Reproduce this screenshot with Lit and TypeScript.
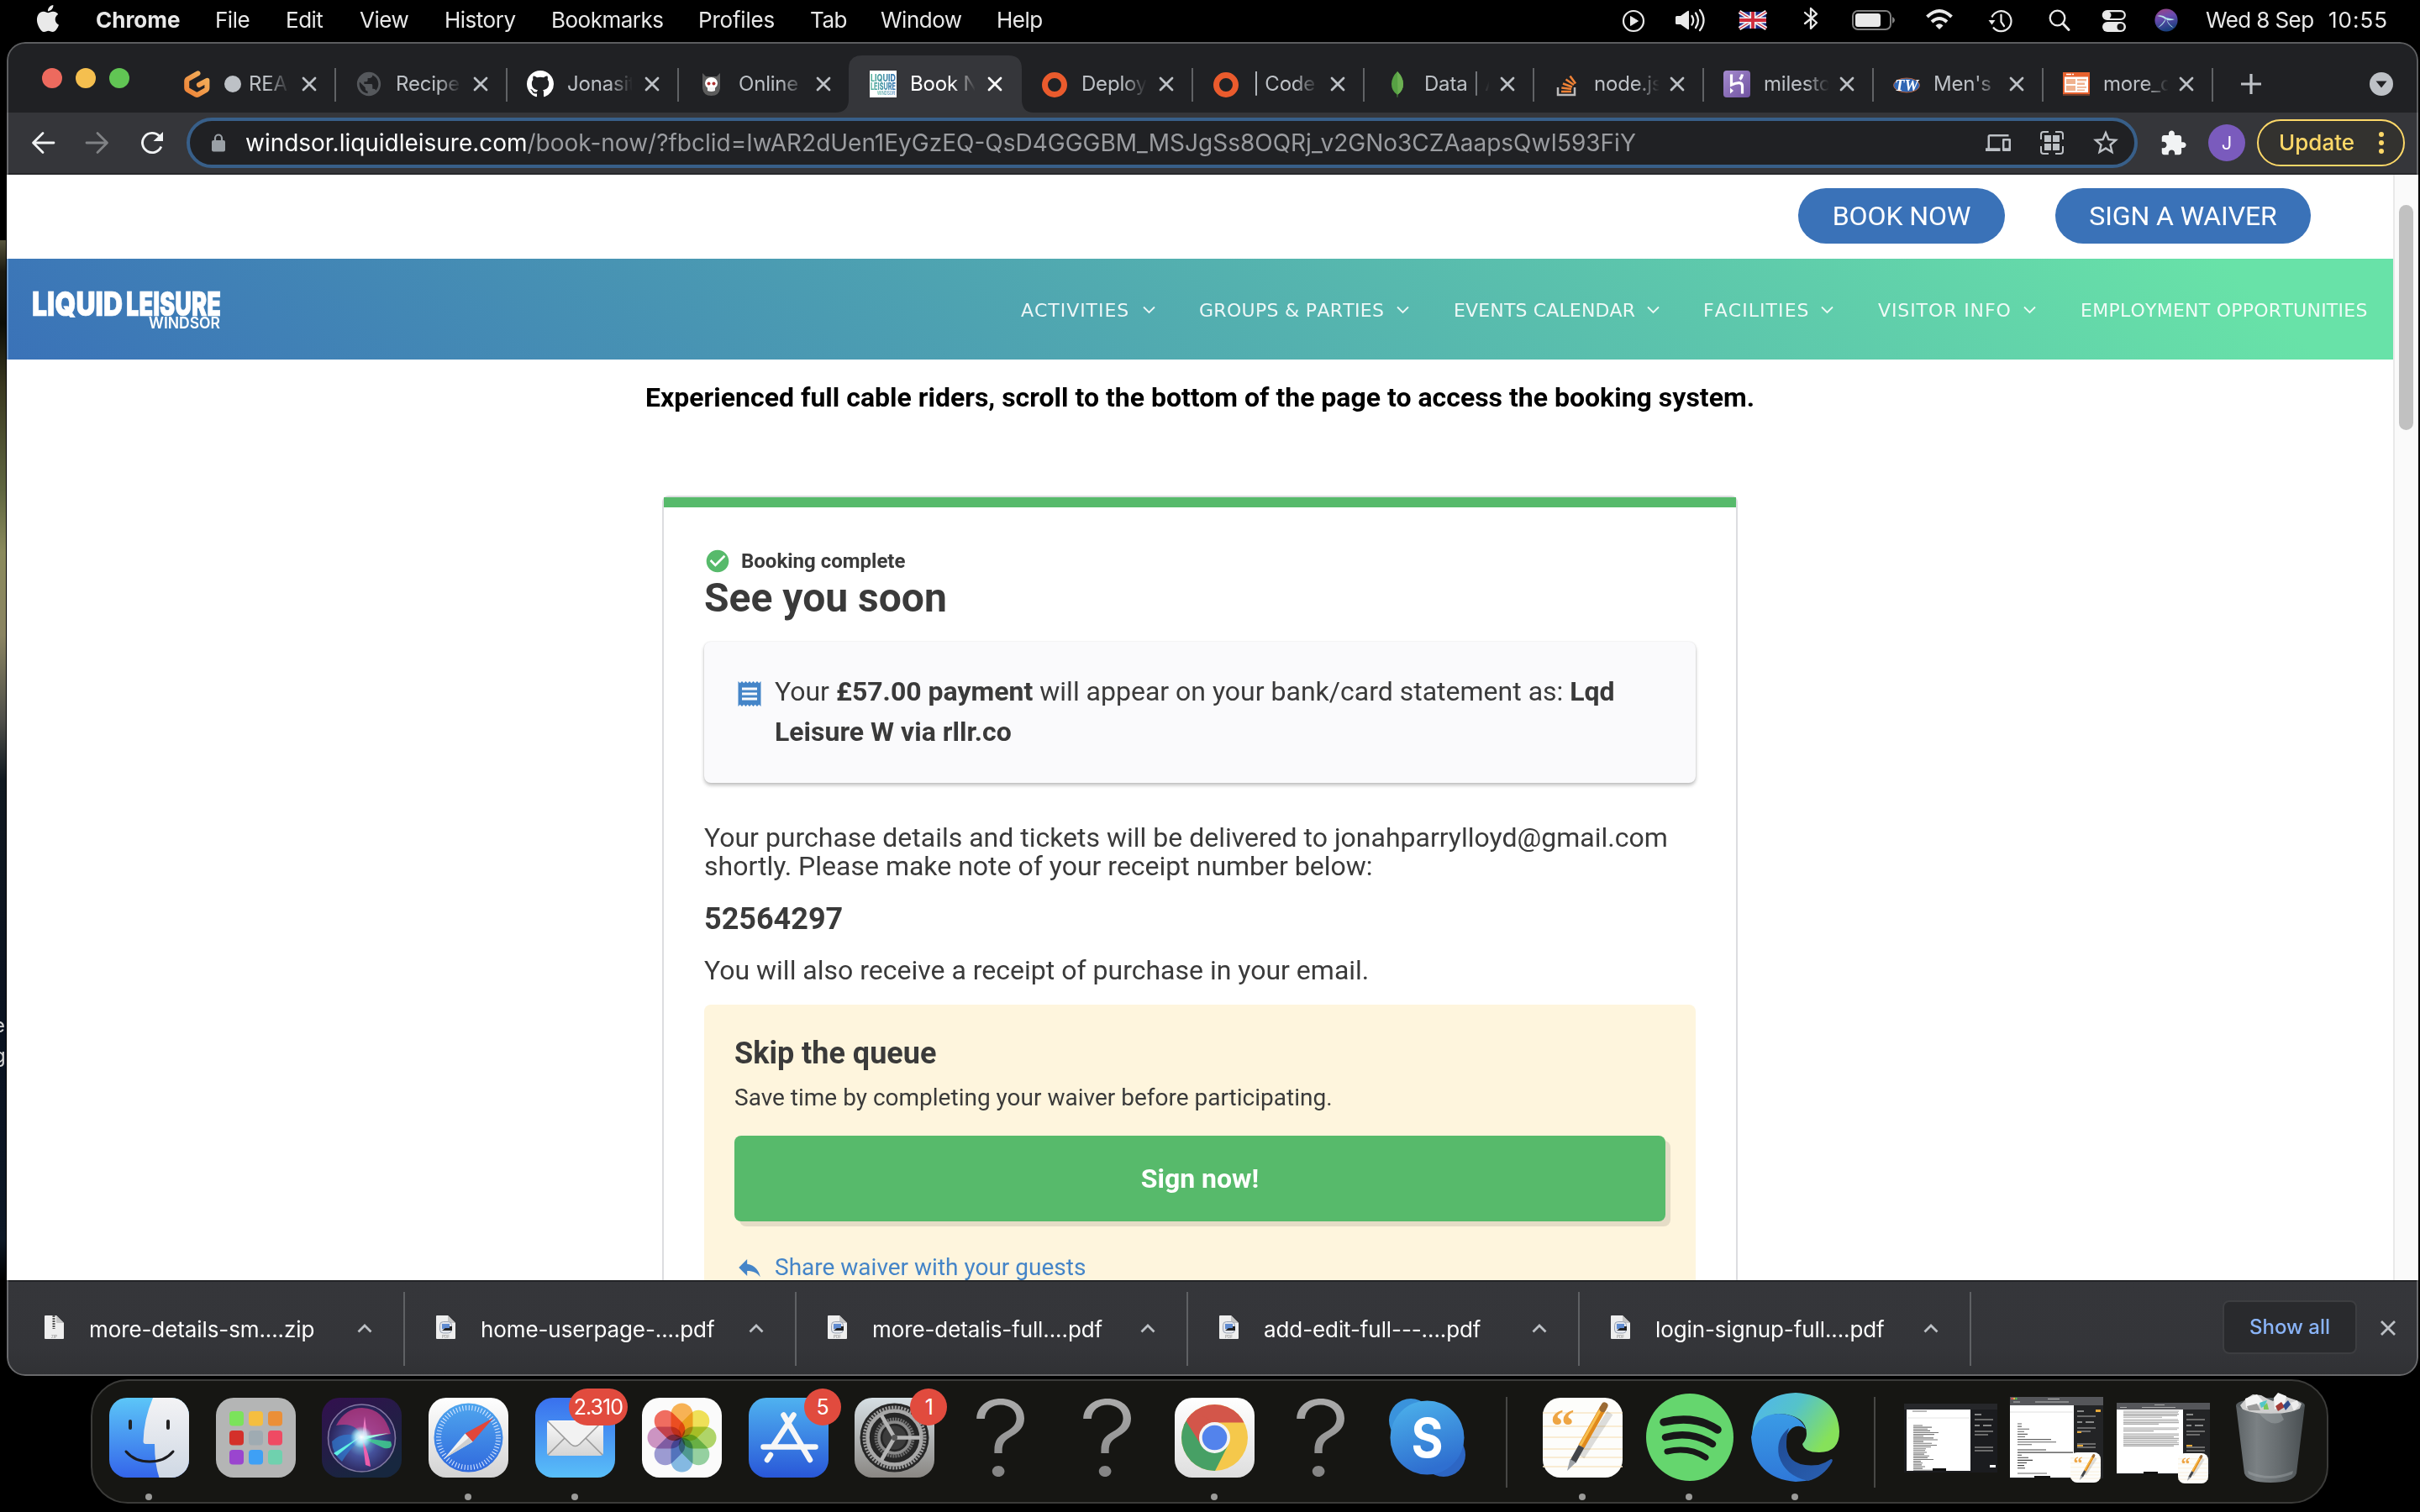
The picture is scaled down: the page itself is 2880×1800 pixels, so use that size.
import { LitElement, html, svg, css, nothing } from "lit";
import { customElement } from "lit/decorators.js";
import { classMap } from "lit/directives/class-map.js";

const base = css`
  * { box-sizing: border-box; }
  :host { display: block; font-family: Inter, "Liberation Sans", sans-serif; }
  svg { display: block; flex: none; overflow: visible; }
`;

const GITHUB =
  "M8 0C3.58 0 0 3.58 0 8c0 3.54 2.29 6.53 5.47 7.59.4.07.55-.17.55-.38 0-.19-.01-.82-.01-1.49-2.01.37-2.53-.49-2.69-.94-.09-.23-.48-.94-.82-1.13-.28-.15-.68-.52-.01-.53.63-.01 1.08.58 1.23.82.72 1.21 1.87.87 2.33.66.07-.52.28-.87.51-1.07-1.78-.2-3.64-.89-3.64-3.95 0-.87.31-1.59.82-2.15-.08-.2-.36-1.02.08-2.12 0 0 .67-.21 2.2.82.64-.18 1.32-.27 2-.27.68 0 1.36.09 2 .27 1.53-1.04 2.2-.82 2.2-.82.44 1.1.16 1.92.08 2.12.51.56.82 1.27.82 2.15 0 3.07-1.87 3.75-3.65 3.95.29.25.54.73.54 1.48 0 1.07-.01 1.93-.01 2.2 0 .21.15.46.55.38A8.013 8.013 0 0016 8c0-4.42-3.58-8-8-8z";
const GLOBE =
  "M12 2C6.48 2 2 6.48 2 12s4.48 10 10 10 10-4.48 10-10S17.52 2 12 2zm-1 17.93c-3.95-.49-7-3.85-7-7.93 0-.62.08-1.21.21-1.79L9 15v1c0 1.1.9 2 2 2v1.93zm6.9-2.54c-.26-.81-1-1.39-1.9-1.39h-1v-3c0-.55-.45-1-1-1H8v-2h2c.55 0 1-.45 1-1V7h2c1.1 0 2-.9 2-2v-.41c2.93 1.19 5 4.06 5 7.41 0 2.08-.8 3.97-2.1 5.39z";
const APPLE =
  "M12.152 6.896c-.948 0-2.415-1.078-3.96-1.04-2.04.027-3.91 1.183-4.961 3.014-2.117 3.675-.546 9.103 1.519 12.09 1.013 1.454 2.208 3.09 3.792 3.039 1.52-.065 2.09-.987 3.935-.987 1.831 0 2.35.987 3.96.948 1.637-.026 2.676-1.48 3.676-2.948 1.156-1.688 1.636-3.325 1.662-3.415-.039-.013-3.182-1.221-3.22-4.857-.026-3.04 2.48-4.494 2.597-4.559-1.429-2.09-3.623-2.324-4.39-2.376-2-.156-3.675 1.09-4.61 1.09zM15.53 3.83c.843-1.012 1.4-2.427 1.245-3.83-1.207.052-2.662.805-3.532 1.818-.78.896-1.454 2.338-1.273 3.714 1.338.104 2.715-.688 3.559-1.701";

/* ---------- macOS menu bar ---------- */

const MENUS: [string, string][] = [
  ["File", "m-file"], ["Edit", "m-edit"], ["View", "m-view"], ["History", "m-history"],
  ["Bookmarks", "m-bookmarks"], ["Profiles", "m-profiles"], ["Tab", "m-tab"],
  ["Window", "m-window"], ["Help", "m-help"],
];

@customElement("os-menubar")
class OsMenubar extends LitElement {
  static styles = [base, css`
    :host { height: 50px; background: #000; color: #e9e9e9; font-size: 26px; line-height: 47px; }
    .bar { display: flex; height: 50px; padding-left: 41px; white-space: nowrap; }
    .apple { margin-top: 6px; }
    .menu { flex: none; letter-spacing: -0.5px; }
    .menu.m-app { font-weight: 700; width: 142px; margin-left: 41px; letter-spacing: 0; }
    .m-file { width: 84px; } .m-edit { width: 88px; } .m-view { width: 101px; }
    .m-history { width: 127px; } .m-bookmarks { width: 175px; } .menu.m-profiles { width: 133px; letter-spacing: -0.2px; }
    .m-tab { width: 84px; } .m-window { width: 138px; } .m-help { width: 70px; }
    .status { margin-left: auto; display: flex; align-items: flex-start; padding-right: 37px; }
    .status svg { margin-top: 8px; }
    .date { width: 146px; margin-left: 31px; letter-spacing: -0.6px; }
    .time { width: 72px; letter-spacing: 1px; }
  `];
  render() {
    return html`<div class="bar">
      <svg class="apple" width="32" height="32" viewBox="0 0 24 24" fill="#e9e9e9"><path d=${APPLE} /></svg>
      <span class="menu m-app">Chrome</span>
      ${MENUS.map(([t, c]) => html`<span class="menu ${c}">${t}</span>`)}
      <div class="status">
        <svg width="664" height="34" viewBox="1930 8 664 34">
          <circle cx="1944" cy="25" r="12" fill="none" stroke="#e9e9e9" stroke-width="2.2" />
          <path d="M1940.500 19.500v11l9-5.500z" fill="#e9e9e9" stroke="#e9e9e9" stroke-linejoin="round" />
          <path d="M1994 20.500q0-1.500 1.500-1.500h4.500l8.500-6q1.500-1 1.500 1v20q0 2-1.500 1l-8.500-6h-4.500q-1.500 0-1.500-1.500z" fill="#e9e9e9" />
          <path d="M2013.500 19q3.500 5 0 10.500M2018 15.500q6 8.500 0 17.500M2023 12q9 12.500 0 24" fill="none" stroke="#e9e9e9" stroke-width="2.300" stroke-linecap="round" />
          <rect x="2070" y="14" width="32" height="20" fill="#1d2d86" />
          <path d="M2070 14l32 20M2102 14l-32 20" stroke="#f2f2f5" stroke-width="4.600" />
          <path d="M2070 14l32 20M2102 14l-32 20" stroke="#cf2c3c" stroke-width="1.300" />
          <path d="M2086 14v20M2070 24h32" stroke="#f2f2f5" stroke-width="7" />
          <path d="M2086 14v20M2070 24h32" stroke="#cf2c3c" stroke-width="3.800" />
          <path d="M2148 15l14 12-7 7V10l7 6.500-14 11.500" fill="none" stroke="#e9e9e9" stroke-width="2.300" stroke-linejoin="round" stroke-linecap="round" />
          <rect x="2205" y="13" width="45" height="22" rx="6" fill="none" stroke="#808080" stroke-width="2" />
          <rect x="2208" y="16" width="30" height="16" rx="3" fill="#e9e9e9" />
          <path d="M2252 20q3 1.500 3 4t-3 4z" fill="#808080" />
          <path d="M2293.500 20q14.500-14 29 0M2299 26q9-8 18 0" fill="none" stroke="#e9e9e9" stroke-width="4" />
          <path d="M2303.500 30.500q4.500-4.500 9 0l-4.500 4.500z" fill="#e9e9e9" />
          <path d="M2370.500 20.500a12 12 0 1 1 1.500 12" fill="none" stroke="#e9e9e9" stroke-width="2.200" />
          <path d="M2366.500 24h8l-4 5.500z" fill="#e9e9e9" />
          <path d="M2381.500 17.500v8.500l3.500 5" fill="none" stroke="#e9e9e9" stroke-width="2.200" stroke-linecap="round" />
          <circle cx="2448.500" cy="21.500" r="8.800" fill="none" stroke="#e9e9e9" stroke-width="2.300" />
          <path d="M2455 28l7 7.500" stroke="#e9e9e9" stroke-width="3" stroke-linecap="round" />
          <rect x="2502.800" y="13.200" width="26" height="9.800" rx="4.900" fill="none" stroke="#e9e9e9" stroke-width="2.200" />
          <circle cx="2508" cy="18" r="4.500" fill="#e9e9e9" />
          <rect x="2502" y="26" width="28" height="12" rx="6" fill="#e9e9e9" />
          <circle cx="2523.500" cy="32" r="4" fill="#111" />
          <defs>
            <linearGradient id="ms" x1="0" y1="0" x2="0.300" y2="1"><stop offset="0" stop-color="#a0437f" /><stop offset=".45" stop-color="#6a4bb0" /><stop offset="1" stop-color="#1b3f7f" /></linearGradient>
          </defs>
          <circle cx="2578" cy="24" r="13.600" fill="url(#ms)" />
          <path d="M2568 33q7-3 10-11 2 9 9 11-6-4-8-9 5 1 9-1-6-1-10-2-5-4-11-2 7 1 10 4-3 5-9 10z" fill="#bff6f2" opacity=".9" />
        </svg>
        <span class="date">Wed 8 Sep</span><span class="time">10:55</span>
      </div>
    </div>`;
  }
}

/* ---------- browser chrome ---------- */

const favicons = {
  gitpod: svg`<svg width="32" height="32" viewBox="0 0 32 32"><defs><linearGradient id="gp" x1="1" y1="0" x2="0" y2="1"><stop offset="0" stop-color="#f3b45f"/><stop offset="1" stop-color="#ee8236"/></linearGradient></defs><path d="M16.500 2.800L5 9.300q-1.800 1-1.800 3v7.600q0 2 1.800 3l9.200 5.200q1.200.7 2.400 0l9.200-5.200q1.600-1 1.600-3v-8.600l-9.500 5.200" transform="translate(0 .5)" fill="none" stroke="url(#gp)" stroke-width="6" stroke-linecap="round" stroke-linejoin="round"/></svg>`,
  globe: svg`<svg width="34" height="34" viewBox="0 0 24 24"><path fill="#55585c" d=${GLOBE}/></svg>`,
  github: svg`<svg width="32" height="32" viewBox="0 0 16 16"><path fill="#fff" d=${GITHUB}/></svg>`,
  bunny: svg`<svg width="32" height="32" viewBox="0 0 32 32"><path d="M5 3l4 4h13l4-4v18q-1 9-10.500 9T5 21z" fill="#5c5c5c"/><ellipse cx="15.500" cy="15" rx="7.500" ry="7" fill="#fff"/><path d="M11 20h9v4q-4.500 2-9 0z" fill="#f4f4f4"/><circle cx="12.500" cy="15.500" r="2" fill="#b03434"/><circle cx="18.500" cy="15.500" r="2" fill="#b03434"/></svg>`,
  liquid: svg`<svg width="32" height="32" viewBox="0 0 32 32"><defs><linearGradient id="lq"><stop offset="0" stop-color="#58b49c"/><stop offset="1" stop-color="#3a78b5"/></linearGradient></defs><rect width="32" height="32" fill="#fff"/><g fill="url(#lq)" font-family="Inter, sans-serif" font-weight="800"><text x="1" y="13" font-size="11.500" textLength="30" lengthAdjust="spacingAndGlyphs">LIQUID</text><text x="1" y="23" font-size="11.500" textLength="30" lengthAdjust="spacingAndGlyphs">LEISURE</text><text x="9" y="29" font-size="6" textLength="21" lengthAdjust="spacingAndGlyphs" font-weight="500">WINDSOR</text></g></svg>`,
  ring: svg`<svg width="32" height="32" viewBox="0 0 32 32"><circle cx="16" cy="17" r="11.500" fill="none" stroke="#ea5b2d" stroke-width="7"/></svg>`,
  leaf: svg`<svg width="32" height="32" viewBox="0 0 32 32"><path d="M16 1q7 7 7 15 0 8-6.500 12.500L16.300 32h-.6l-.2-3.500Q9 24 9 16 9 8 16 1z" fill="#57a144"/><path d="M16 1q7 7 7 15 0 8-6.500 12.500z" fill="#6cb052"/></svg>`,
  stack: svg`<svg width="32" height="32" viewBox="0 0 32 32"><path d="M5 20v9h20v-9" fill="none" stroke="#bcbbbb" stroke-width="2.500"/><path d="M9 25h12M9.300 20.500l11.800 1.500M11 15.500l11 4M14.500 10.500l9.500 6.500M19.500 6.500l6.500 9" stroke="#ef8236" stroke-width="2.600"/></svg>`,
  heroku: svg`<svg width="32" height="32" viewBox="0 0 32 32"><defs><linearGradient id="hk" x2="1" y2="1"><stop offset="0" stop-color="#a58bcf"/><stop offset="1" stop-color="#6f52a0"/></linearGradient></defs><rect width="32" height="32" rx="4" fill="url(#hk)"/><path d="M9.500 4.500v12.500q6-2.600 9.500-2.400 3.500.2 3.500 3.900v9M22.500 4.500q-.4 3.500-3 6" fill="none" stroke="#fff" stroke-width="3.200"/><path d="M8 20.500v7l4-3.500z" fill="#fff"/></svg>`,
  tw: svg`<svg width="32" height="32" viewBox="0 0 32 32"><ellipse cx="16" cy="17.500" rx="15.500" ry="8.500" fill="#2f66b4" stroke="#b4623e" stroke-width="1"/><text x="16" y="23.500" text-anchor="middle" font-family="Liberation Serif, serif" font-weight="700" font-style="italic" font-size="18" textLength="28" lengthAdjust="spacingAndGlyphs" fill="#fff">TW</text></svg>`,
  sheet: svg`<svg width="32" height="32" viewBox="0 0 32 32"><rect y="2" width="32" height="26" fill="#e8622f"/><rect x="2" y="7.500" width="28" height="18.500" fill="#fff"/><path d="M4 4.500h6M11 4.500h2" stroke="#fff" stroke-width="1.500"/><path d="M4 10h11v6H4zM4 18h11v6H4zM17 10h11v2.500H17zM17 14.500h9V17h-9zM17 19h11v1.800H17zM17 22.500h9V24h-9z" fill="#f0b28f"/><rect y="28" width="32" height="2" fill="#6b3c2c"/></svg>`,
};

interface Tab { icon: keyof typeof favicons; title: string; active?: boolean; dot?: boolean; sep?: boolean; narrow?: boolean; }
const TABS: Tab[] = [
  { icon: "gitpod", title: "READM", dot: true, sep: true },
  { icon: "globe", title: "Recipe ", sep: true },
  { icon: "github", title: "Jonasit", sep: true },
  { icon: "bunny", title: "Online" },
  { icon: "liquid", title: "Book N", active: true },
  { icon: "ring", title: "Deploy", sep: true },
  { icon: "ring", title: "| Code", sep: true },
  { icon: "leaf", title: "Data | A", sep: true, narrow: true },
  { icon: "stack", title: "node.js", sep: true, narrow: true },
  { icon: "heroku", title: "milesto", sep: true, narrow: true },
  { icon: "tw", title: "Men's ", sep: true, narrow: true },
  { icon: "sheet", title: "more_d", sep: true, narrow: true },
];

@customElement("browser-chrome")
class BrowserChrome extends LitElement {
  static styles = [base, css`
    :host { height: 158px; background: #202124; }
    .strip { display: flex; height: 84px; padding-left: 42px; }
    .lights { display: flex; gap: 16px; width: 146px; padding-top: 31px; }
    .light { width: 24px; height: 24px; border-radius: 50%; }
    .red { background: #ed6a5e; } .amber { background: #f5bf4f; } .green { background: #61c554; }
    .tab { position: relative; width: 204px; height: 84px; padding: 16px 0 0 23px; display: flex; align-items: center; color: #bdc1c6; font-size: 24px; }
    .tab.narrow { width: 202px; }
    .tab.sep::after { content: ""; position: absolute; right: 0; top: 31px; width: 2px; height: 40px; background: #606265; }
    .shape { position: absolute; left: -18px; top: 16px; }
    .icon { width: 32px; height: 32px; display: flex; align-items: center; justify-content: center; position: relative; }
    .title { position: relative; width: 77px; margin-left: 16px; height: 40px; line-height: 38px; overflow: hidden; white-space: pre; display: flex; align-items: center; letter-spacing: -0.2px;
      -webkit-mask-image: linear-gradient(90deg, #000 50px, transparent 78px); mask-image: linear-gradient(90deg, #000 50px, transparent 78px); }
    .dot { width: 20px; height: 20px; border-radius: 50%; background: #bdc1c6; margin-right: 9px; flex: none; }
    .close { margin-left: 16px; position: relative; }
    .narrow .close { margin-left: 14px; }
    .active { color: #fff; }
    .plus { margin: 38px 0 0 33px; }
    .more { margin-left: auto; padding: 36px 30px 0 0; }
    .toolbar { height: 74px; background: #35363a; border-bottom: 2px solid #27282b; display: flex; align-items: center; padding-left: 27px; }
    .btn { width: 65px; }
    .omni { width: 2322px; height: 60px; border-radius: 30px; border: 4px solid #385f89; background: #202124; display: flex; align-items: center; padding-left: 26px; margin-left: -8px; color: #9a9ca0; font-size: 28px; white-space: nowrap; }
    .url { margin-left: 24px; line-height: 53px; }
    .host { color: #fff; letter-spacing: -0.02px; }
    .acts { margin-left: auto; display: flex; align-items: center; padding-right: 16px; }
    .qr { margin: 0 31px 0 34px; }
    .ext { margin-left: 26px; }
    .avatar { width: 44px; height: 44px; border-radius: 50%; background: #7a5bbd; color: #fff; font-size: 22px; line-height: 44px; text-align: center; margin-left: 25px; }
    .update { width: 176px; height: 56px; border-radius: 28px; border: 2px solid #fdd868; background: #33322f; color: #fdd868; font-size: 26px; font-weight: 500; line-height: 52px; margin-left: 14px; padding-left: 24px; display: flex; align-items: center; }
    .dots { margin-left: auto; margin-right: 22px; }
  `];
  render() {
    return html`
      <div class="strip">
        <div class="lights"><i class="light red"></i><i class="light amber"></i><i class="light green"></i></div>
        ${TABS.map((t) => html`<div class=${classMap({ tab: true, active: !!t.active, sep: !!t.sep, narrow: !!t.narrow })}>
          ${t.active ? html`<svg class="shape" width="236" height="68"><path fill="#35363a" d="M0 68q16 0 16-16V16Q16 0 32 0h174q16 0 16 16v36q0 16 14 16z" /></svg>` : nothing}
          <span class="icon">${favicons[t.icon]}</span>
          <span class="title">${t.dot ? html`<i class="dot"></i>` : nothing}${t.title}</span>
          <svg class="close" width="16" height="16" viewBox="0 0 16 16"><path d="M1 1l14 14M15 1L1 15" stroke=${t.active ? "#fff" : "#bdc1c6"} stroke-width="2.800" stroke-linecap="round" /></svg>
        </div>`)}
        <svg class="plus" width="24" height="24" viewBox="0 0 24 24"><path d="M12 0v24M0 12h24" stroke="#bdc1c6" stroke-width="3.200" /></svg>
        <div class="more"><svg width="28" height="28" viewBox="0 0 28 28"><circle cx="14" cy="14" r="14" fill="#bdc1c6" /><path d="M7.500 10.500h13L14 18.500z" fill="#202124" /></svg></div>
      </div>
      <div class="toolbar">
        <svg class="btn" width="65" height="28" viewBox="-2 0 65 28"><path d="M27 14H3M14 2.500L2.500 14 14 25.500" fill="none" stroke="#f1f3f4" stroke-width="2.800" stroke-linecap="round" stroke-linejoin="round" /></svg>
        <svg class="btn" width="65" height="28" viewBox="-2 0 65 28"><path d="M1 14h24M14 2.500L25.500 14 14 25.500" fill="none" stroke="#808285" stroke-width="2.800" stroke-linecap="round" stroke-linejoin="round" /></svg>
        <svg class="btn" width="65" height="28" viewBox="-2 0 65 28"><path d="M22.500 6A11.600 11.600 0 1 0 24.800 18.500" fill="none" stroke="#f1f3f4" stroke-width="2.900" /><path d="M27 1v11H15.500z" fill="#f1f3f4" /></svg>
        <div class="omni">
          <svg width="16" height="22" viewBox="0 0 16 22"><rect y="8" width="16" height="13.500" rx="2" fill="#9aa0a6" /><path d="M4 9V5.500a4 4 0 0 1 8 0V9" fill="none" stroke="#9aa0a6" stroke-width="2.200" /></svg>
          <span class="url"><span class="host">windsor.liquidleisure.com</span><span class="path">/book-now/?fbclid=IwAR2dUen1EyGzEQ-QsD4GGGBM_MSJgSs8OQRj_v2GNo3CZAaapsQwI593FiY</span></span>
          <div class="acts">
            <svg width="30" height="30" viewBox="0 0 24 24" fill="#bdc1c6"><path d="M4 6h18V4H4c-1.100 0-2 .9-2 2v11H0v3h14v-3H4V6zm19 2h-6c-.55 0-1 .45-1 1v10c0 .55.45 1 1 1h6c.55 0 1-.45 1-1V9c0-.55-.45-1-1-1zm-1 9h-4v-7h4v7z" /></svg>
            <svg class="qr" width="30" height="30" viewBox="0 0 30 30"><path d="M2 11V5q0-3 3-3h6M19 2h6q3 0 3 3v6M28 19v6q0 3-3 3h-6M11 28H5q-3 0-3-3v-6" fill="none" stroke="#bdc1c6" stroke-width="2" /><path d="M6 6h8v8H6zM16 6h8v8h-8zM6 16h8v8H6zM16 16h8v8h-8z" fill="#bdc1c6" /></svg>
            <svg width="36" height="36" viewBox="0 0 24 24" fill="#bdc1c6"><path d="M22 9.240l-7.190-.62L12 2 9.190 8.630 2 9.240l5.460 4.730L5.820 21 12 17.270 18.180 21l-1.630-7.030L22 9.240zM12 15.400l-3.760 2.270 1-4.280-3.320-2.880 4.380-.38L12 6.100l1.710 4.040 4.380.38-3.320 2.880 1 4.280L12 15.400z" /></svg>
          </div>
        </div>
        <svg class="ext" width="33" height="33" viewBox="0 0 24 24" fill="#f1f3f4"><path d="M20.500 11H19V7c0-1.100-.9-2-2-2h-4V3.500C13 2.120 11.880 1 10.500 1S8 2.120 8 3.500V5H4c-1.100 0-1.990.9-1.990 2v3.800H3.500c1.490 0 2.700 1.210 2.700 2.700s-1.210 2.700-2.700 2.700H2V20c0 1.100.9 2 2 2h3.800v-1.500c0-1.490 1.210-2.700 2.700-2.700 1.490 0 2.700 1.210 2.700 2.700V22H17c1.100 0 2-.9 2-2v-4h1.500c1.380 0 2.500-1.120 2.500-2.500S21.880 11 20.500 11z" /></svg>
        <span class="avatar">J</span>
        <div class="update">Update<svg class="dots" width="8" height="28" viewBox="0 0 8 28" fill="#fdd868"><circle cx="4" cy="4" r="3" /><circle cx="4" cy="14" r="3" /><circle cx="4" cy="24" r="3" /></svg></div>
      </div>`;
  }
}

/* ---------- web page ---------- */

const NAV: [string, string][] = [
  ["ACTIVITIES", "n1"], ["GROUPS & PARTIES", "n2"], ["EVENTS CALENDAR", "n3"],
  ["FACILITIES", "n4"], ["VISITOR INFO", "n5"], ["EMPLOYMENT OPPORTUNITIES", "n6"],
];

@customElement("booking-page")
class BookingPage extends LitElement {
  static styles = [base, css`
    :host { display: flex; height: 1316px; overflow: hidden; background: #fff; color: #3a3a3a; font-family: Roboto, "Liberation Sans", sans-serif; }
    .doc { width: 2840px; }
    .top { height: 100px; display: flex; justify-content: flex-end; gap: 60px; padding: 16px 98px 0 0; }
    .pill { height: 66px; border-radius: 33px; background: #3a72b8; color: #fff; font-size: 32px; line-height: 66px; text-align: center; width: 246px; letter-spacing: -0.1px; }
    .pill.wide { width: 304px; }
    .nav { height: 120px; background: linear-gradient(45deg, #3a72b8 0%, #68e2a8 93%); display: flex; align-items: center; padding: 0 30px; color: #fff; }
    .logo { margin-top: 1px; }
    .links { margin-left: auto; display: flex; font-family: "DejaVu Sans", sans-serif; font-size: 22px; font-kerning: none; line-height: 40px; white-space: nowrap; opacity: .9; }
    .link { display: flex; align-items: center; justify-content: space-between; padding-top: 4px; }
    .link svg { margin-top: -3px; }
    .n1 { width: 160px; margin-right: 52px; letter-spacing: .95px; } .n2 { width: 250px; margin-right: 53px; letter-spacing: .3px; } .n3 { width: 245px; margin-right: 52px; letter-spacing: .15px; }
    .n4 { width: 155px; margin-right: 53px; letter-spacing: 1.05px; } .n5 { width: 188px; margin-right: 53px; letter-spacing: .9px; } .n6 { width: 342px; letter-spacing: .25px; }
    .lead { margin: 21px 0 0; font-size: 32px; line-height: 48px; font-weight: 700; color: #000; text-align: center; }
    .card { width: 1280px; margin: 93px auto 0; border: 2px solid #dcdde0; border-bottom: 0; border-radius: 8px 8px 0 0; height: 960px; }
    .stripe { height: 12px; background: #57ba6b; }
    .body { padding: 50px 48px 0; }
    .done { display: flex; align-items: center; height: 28px; font-size: 24px; font-weight: 700; line-height: 28px; gap: 12px; }
    h1 { margin: 2px 0 0; font-size: 48px; line-height: 56px; font-weight: 700; }
    .pay { margin-top: 24px; height: 168px; border-radius: 8px; background: #fafafc; box-shadow: 0 3px 4px rgba(0, 0, 0, .24), 0 0 2px rgba(0, 0, 0, .12); padding: 35px 36px 0; display: flex; gap: 12px; font-size: 32px; line-height: 48px; }
    .pay svg { margin-top: 9px; }
    p { margin: 0; }
    .info { margin-top: 48px; font-size: 32px; line-height: 34px; }
    .num { margin-top: 25.500px; font-size: 36px; line-height: 40px; font-weight: 700; }
    .also { margin-top: 24.500px; font-size: 32px; line-height: 34px; }
    .skip { margin-top: 24px; height: 400px; border-radius: 8px 8px 0 0; background: #fef5dd; padding: 37.500px 36px 0; }
    h2 { margin: 0; font-size: 36px; line-height: 40px; font-weight: 700; }
    .save { margin-top: 16.500px; font-size: 28px; line-height: 34px; }
    .sign { margin-top: 28px; height: 102px; border-radius: 8px; background: #57ba6b; box-shadow: 6px 6px 0 #e5dcc6; color: #fff; font-size: 32px; font-weight: 700; line-height: 102px; text-align: center; }
    .share { margin-top: 38px; display: flex; gap: 12px; color: #4585c8; font-size: 28px; line-height: 34px; }
    .scroll { width: 30px; background: #fafafa; border-left: 2px solid #e9e9e9; padding: 36px 0 0 5px; }
    .thumb { width: 17px; height: 268px; border-radius: 9px; background: #c1c1c1; }
  `];
  render() {
    return html`
      <div class="doc">
        <div class="top"><span class="pill">BOOK NOW</span><span class="pill wide">SIGN A WAIVER</span></div>
        <nav class="nav">
          <svg class="logo" width="226" height="48" viewBox="0 0 226 48" fill="#fff" stroke="#fff" font-family="Inter, sans-serif">
            <text x="0" y="31" font-size="40" font-weight="900" stroke-width=".6" textLength="108" lengthAdjust="spacingAndGlyphs">LIQUID</text>
            <text x="112" y="31" font-size="40" font-weight="900" stroke-width=".6" textLength="113" lengthAdjust="spacingAndGlyphs">LEISURE</text>
            <text x="139" y="46" font-size="19" font-weight="600" stroke-width="0" textLength="85" lengthAdjust="spacingAndGlyphs">WINDSOR</text>
          </svg>
          <div class="links">
            ${NAV.map(([t, c]) => html`<span class="link ${c}">${t}${c === "n6" ? nothing : html`<svg width="15" height="10" viewBox="0 0 15 10"><path d="M1 1.500l6.500 6.500L14 1.500" fill="none" stroke="#fff" stroke-width="1.800" /></svg>`}</span>`)}
          </div>
        </nav>
        <p class="lead">Experienced full cable riders, scroll to the bottom of the page to access the booking system.</p>
        <section class="card">
          <div class="stripe"></div>
          <div class="body">
            <div class="done"><svg width="32" height="32" viewBox="0 0 24 24"><path fill="#57ba6b" d="M12 2C6.480 2 2 6.480 2 12s4.480 10 10 10 10-4.480 10-10S17.520 2 12 2zm-2 15l-5-5 1.410-1.410L10 14.170l7.590-7.590L19 8l-9 9z" /></svg>Booking complete</div>
            <h1>See you soon</h1>
            <div class="pay">
              <svg width="36" height="36" viewBox="0 0 24 24"><path fill="#4585c8" d="M18 17H6v-2h12v2zm0-4H6v-2h12v2zm0-4H6V7h12v2zM3 22l1.500-1.500L6 22l1.500-1.500L9 22l1.500-1.500L12 22l1.500-1.500L15 22l1.500-1.500L18 22l1.500-1.500L21 22V2l-1.500 1.500L18 2l-1.500 1.500L15 2l-1.500 1.500L12 2l-1.500 1.500L9 2 7.500 3.500 6 2 4.500 3.500 3 2v20z" /></svg>
              <span>Your <b>£57.00 payment</b> will appear on your bank/card statement as: <b>Lqd<br />Leisure W via rllr.co</b></span>
            </div>
            <p class="info">Your purchase details and tickets will be delivered to jonahparrylloyd@gmail.com<br />shortly. Please make note of your receipt number below:</p>
            <p class="num">52564297</p>
            <p class="also">You will also receive a receipt of purchase in your email.</p>
            <div class="skip">
              <h2>Skip the queue</h2>
              <p class="save">Save time by completing your waiver before participating.</p>
              <div class="sign">Sign now!</div>
              <div class="share"><svg width="36" height="34" viewBox="0 0 24 24"><path fill="#4585c8" d="M10 9V5l-7 7 7 7v-4.100c5 0 8.500 1.600 11 5.100-1-5-4-10-11-11z" /></svg>Share waiver with your guests</div>
            </div>
          </div>
        </section>
      </div>
      <div class="scroll"><div class="thumb"></div></div>`;
  }
}

/* ---------- download shelf ---------- */

const FILES = ["more-details-sm....zip", "home-userpage-....pdf", "more-detalis-full....pdf", "add-edit-full---....pdf", "login-signup-full....pdf"];

@customElement("download-shelf")
class DownloadShelf extends LitElement {
  static styles = [base, css`
    :host { height: 114px; background: linear-gradient(#35363a, #343539 70%, #303134); border-top: 2px solid #232427; }
    .row { display: flex; height: 110px; }
    .file { position: relative; width: 466px; padding: 0 0 0 37px; display: flex; align-items: center; color: #fff; font-size: 26px; line-height: 40px; }
    .file:first-child { width: 474px; padding-left: 45px; }
    .file::after { content: ""; position: absolute; right: 0; top: 12px; width: 2px; height: 88px; background: #5f6164; }
    .name { margin-left: 29px; padding-top: 3px; white-space: nowrap; width: 319px; letter-spacing: -0.1px; }
    .right { margin-left: auto; display: flex; align-items: center; padding-right: 27px; }
    .all { width: 160px; height: 64px; border-radius: 8px; border: 2px solid #3d3e41; background: #292a2d; color: #8ab4f8; font-size: 24px; font-weight: 500; text-align: center; line-height: 59px; margin-right: 28px; margin-top: -3px; }
  `];
  render() {
    return html`<div class="row">
      ${FILES.map((f, i) => html`<div class="file">
        <svg width="24" height="30" viewBox="0 0 24 30"><path d="M0 1q0-1 1-1h13l9 9v18q0 1-1 1H1q-1 0-1-1z" fill="#eeeeee" /><path d="M14 0l9 9h-8q-1 0-1-1z" fill="#c4c4c4" />
          ${i === 0
            ? svg`<path d="M11 0v16" stroke="#555" stroke-width="3" stroke-dasharray="2 1"/><text x="11.500" y="26.500" font-size="4.500" text-anchor="middle" fill="#888" font-family="Inter, sans-serif">ZIP</text>`
            : svg`<rect x="4.500" y="7.500" width="14" height="13.500" rx="4" fill="#e3e6ec" stroke="#9aa3b2"/><rect x="7" y="10" width="9" height="6" fill="#5f8bd0"/><path d="M7 18l4-3h5v-2h3v5z" fill="#222"/><text x="11.500" y="26.500" font-size="4.500" text-anchor="middle" fill="#888" font-family="Inter, sans-serif">PDF</text>`}
        </svg>
        <span class="name">${f}</span>
        <svg width="18" height="11" viewBox="0 0 18 11"><path d="M1.500 9.500L9 2l7.500 7.500" fill="none" stroke="#bdc1c6" stroke-width="2.800" /></svg>
      </div>`)}
      <div class="right"><span class="all">Show all</span><svg width="18" height="18" viewBox="0 0 18 18"><path d="M1 1l16 16M17 1L1 17" stroke="#bdc1c6" stroke-width="2.800" /></svg></div>
    </div>`;
  }
}

/* ---------- dock ---------- */

const tile = (fill: string) => svg`<rect width="95" height="95" rx="21" fill=${fill}/>`;
const PETALS = ["#f6a02c", "#ecd92f", "#9ccb45", "#7cc58a", "#67a9dc", "#8583c8", "#c07ab4", "#ee4a3a"];
const PADS = ["#7be35b", "#f5be3f", "#eb8f37", "#d4302a", "#9fabb2", "#ef4a63", "#9a45cf", "#3ea0f5", "#6fd1ae"];

const penNote = svg`
  <rect width="95" height="95" rx="21" fill="#fdfdfb"/>
  <path d="M0 18h95M0 34h95M0 47h95M0 61h95M0 71h95M0 82h95" stroke="#f8e6c6" stroke-width="1.500"/>
  <text x="9" y="53" font-size="58" font-family="Liberation Serif, serif" font-weight="700" fill="#eea544">“</text>
  <path d="M42 66L76 14" stroke="#000" stroke-opacity=".13" stroke-width="8" transform="translate(4 4)"/>
  <path d="M46 58L72 12" stroke="#e08a1c" stroke-width="8"/>
  <path d="M44.500 57L70.500 11" stroke="#f8c050" stroke-width="3"/>
  <path d="M71.500 13l2-3.500" stroke="#9a6a35" stroke-width="8" stroke-linecap="round"/>
  <path d="M36 76l10-18" stroke="#44464a" stroke-width="7.500"/>
  <path d="M29 87l3.500-14 7 4z" fill="#9fa3a8"/>`;

const glyphs: Record<string, unknown> = {
  finder: svg`<svg width="95" height="95"><defs><linearGradient id="f1" x2="0" y2="1"><stop offset="0" stop-color="#5cc6f8"/><stop offset="1" stop-color="#3465ea"/></linearGradient><linearGradient id="f2" x2="0" y2="1"><stop offset="0" stop-color="#f3f3f5"/><stop offset="1" stop-color="#cfd8e4"/></linearGradient><clipPath id="fc"><rect width="95" height="95" rx="21"/></clipPath></defs>
    <g clip-path="url(#fc)"><rect width="95" height="95" fill="url(#f1)"/><path d="M52 0Q41 26 40.500 52q0 3 3 3H54q0 24 5.500 40H95V0z" fill="url(#f2)"/></g>
    <path d="M25 28v8M70 28v8" stroke="#222" stroke-width="4" stroke-linecap="round"/><path d="M20 64q10 12 28 12t28-12" fill="none" stroke="#1b1b1f" stroke-width="3" stroke-linecap="round"/></svg>`,
  launchpad: svg`<svg width="95" height="95">${tile("#b4b5b5")}${PADS.map((c, i) => svg`<rect x=${16 + (i % 3) * 23} y=${16 + Math.floor(i / 3) * 23} width="17" height="17.500" rx="4" fill=${c}/>`)}</svg>`,
  siri: svg`<svg width="95" height="95"><defs><linearGradient id="s0" x2="0.500" y2="1"><stop offset="0" stop-color="#33104f"/><stop offset="1" stop-color="#17273f"/></linearGradient><radialGradient id="s1" cx=".5" cy=".55"><stop offset="0" stop-color="#7ac9e8"/><stop offset=".45" stop-color="#45529c"/><stop offset="1" stop-color="#2a2358"/></radialGradient><radialGradient id="s2"><stop offset="0" stop-color="#fff"/><stop offset=".5" stop-color="#c9f5ff" stop-opacity=".8"/><stop offset="1" stop-color="#9ff" stop-opacity="0"/></radialGradient></defs>
    ${tile("url(#s0)")}<circle cx="47.500" cy="48" r="40" fill="url(#s1)"/>
    <path d="M17 33Q28 12 48 12q26 1 34 31-20 4-34 5Q42 28 17 33z" fill="#c93a86" opacity=".7"/>
    <path d="M12 52q14-14 36-4-16 14-24 28Q12 66 12 52z" fill="#2f7bd0" opacity=".7"/>
    <path d="M48 48q8 18 10 34l-6-2z" fill="#ff5fae" opacity=".9"/><path d="M48 48l34 4q4 10-8 8z" fill="#3fcf8f" opacity=".85"/><path d="M46 46L14 66l4 3z" fill="#5ff1e2"/><path d="M48 48l3-26 3 24z" fill="#ff8ad0" opacity=".8"/><path d="M48 46l32-4-30 8z" fill="#9ffadf"/>
    <circle cx="47" cy="47" r="13" fill="url(#s2)"/><circle cx="47.500" cy="48" r="40" fill="none" stroke="#a99cc4" stroke-opacity=".7" stroke-width="1.600"/></svg>`,
  safari: svg`<svg width="95" height="95"><defs><linearGradient id="sf" x2="0" y2="1"><stop offset="0" stop-color="#fff"/><stop offset="1" stop-color="#d3d3d3"/></linearGradient><linearGradient id="sb" x2="0" y2="1"><stop offset="0" stop-color="#4fa6ee"/><stop offset="1" stop-color="#3069dd"/></linearGradient></defs>${tile("url(#sf)")}<circle cx="47.500" cy="47.500" r="41" fill="url(#sb)"/><circle cx="47.500" cy="47.500" r="35.500" fill="none" stroke="#dfeaff" stroke-width="6" stroke-dasharray="1 2.718"/><path d="M77 24L52.500 52.500l-9-10z" fill="#e2463b"/><path d="M19 72l24.500-29.500 9 10z" fill="#f2f2f2"/><path d="M48 47.500L19 72l33.500-19.500z" fill="#cfcfcf"/></svg>`,
  mail: svg`<svg width="95" height="95"><defs><linearGradient id="ml" x2="0" y2="1"><stop offset="0" stop-color="#3970ee"/><stop offset="1" stop-color="#59bff8"/></linearGradient><linearGradient id="me" x2="0" y2="1"><stop offset="0" stop-color="#fafafa"/><stop offset="1" stop-color="#d4d4d4"/></linearGradient></defs>${tile("url(#ml)")}<rect x="14" y="27" width="67" height="42" rx="4" fill="url(#me)"/><path d="M15 68l20-20M80 68L60 48" stroke="#9b9b9b" stroke-width="1.600"/><path d="M15 28l27 27q5.500 5 11 0l27-27" fill="#f2f2f2" stroke="#9b9b9b" stroke-width="1.600"/></svg>`,
  photos: svg`<svg width="95" height="95">${tile("#fbfbfb")}<g class="petals">${PETALS.map((c, i) => svg`<rect class="petal" x="34.500" y="6.500" width="26" height="41" rx="13" fill=${c} fill-opacity=".8" transform=${`rotate(${i * 45} 47.500 47.500)`}/>`)}</g></svg>`,
  store: svg`<svg width="95" height="95"><defs><linearGradient id="as" x2="0" y2="1"><stop offset="0" stop-color="#4fb2f0"/><stop offset="1" stop-color="#2957d8"/></linearGradient></defs>${tile("url(#as)")}<path d="M41.500 20.500L73 74M53.500 20.500L30 56M17.500 58.500h62M26 68l-4 6" stroke="#f7f7f7" stroke-width="6.500" stroke-linecap="round"/></svg>`,
  settings: svg`<svg width="95" height="95"><defs><linearGradient id="st" x2="0" y2="1"><stop offset="0" stop-color="#d6dfe4"/><stop offset="1" stop-color="#8a8783"/></linearGradient></defs>${tile("url(#st)")}<circle cx="47.500" cy="47.500" r="41" fill="#262626"/><circle cx="47.500" cy="47.500" r="36" fill="none" stroke="#9a9a9a" stroke-width="4" stroke-dasharray="2.300 1.469"/><circle cx="47.500" cy="47.500" r="32" fill="none" stroke="#a8a8a8" stroke-width="4.500"/><circle cx="47.500" cy="47.500" r="22" fill="none" stroke="#6e6e6e" stroke-width="4" stroke-dasharray="2 1.140"/><circle cx="47.500" cy="47.500" r="18.500" fill="none" stroke="#8a8a8a" stroke-width="3.500"/><circle cx="47.500" cy="47.500" r="14" fill="#3c3c3c"/><path d="M47.500 47.500H78M47.500 47.500L32 21M47.500 47.500L32 74" stroke="#b5b5b5" stroke-width="4.500"/><circle cx="47.500" cy="47.500" r="3.500" fill="#555"/></svg>`,
  chrome: svg`<svg width="95" height="95"><defs><linearGradient id="cw" x2="0" y2="1"><stop offset="0" stop-color="#fff"/><stop offset="1" stop-color="#dedede"/></linearGradient><clipPath id="cc"><circle cx="47.500" cy="47.500" r="39.500"/></clipPath></defs>${tile("url(#cw)")}<g clip-path="url(#cc)"><rect width="95" height="95" fill="#f5c84b"/><path d="M47.500 29.500H95V0H0v20l32 36.500z" fill="#d3564a"/><path d="M10 22L0 40v55h44l19.500-38.500-16 9-16-9z" fill="#47a065"/><path d="M32 56.500L12.500 21.500 30 20l17.500 9.500z" fill="#d3564a"/></g><circle cx="47.500" cy="47.500" r="18.500" fill="#f4f4f4"/><circle cx="47.500" cy="47.500" r="14.800" fill="#5383ec"/></svg>`,
  skype: svg`<svg width="95" height="95"><defs><linearGradient id="sk" x2="0.300" y2="1"><stop offset="0" stop-color="#4db4ec"/><stop offset="1" stop-color="#2f6fd0"/></linearGradient></defs><circle cx="28" cy="27" r="26" fill="#3a93dc"/><circle cx="67" cy="68" r="26" fill="#2d66c4"/><circle cx="47.500" cy="47.500" r="44" fill="url(#sk)"/><text x="47.500" y="71" text-anchor="middle" font-family="Inter, sans-serif" font-weight="700" font-size="64" textLength="38" lengthAdjust="spacingAndGlyphs" fill="#fff">S</text></svg>`,
  notes: svg`<svg width="95" height="95">${penNote}</svg>`,
  spotify: svg`<svg class="spotify" width="104" height="104"><circle cx="52" cy="52" r="52" fill="#65d66e"/><g fill="none" stroke="#181818" stroke-linecap="round"><path d="M21 34q37-9 64 9" stroke-width="9.500"/><path d="M23 52q31-8 56 8" stroke-width="8.500"/><path d="M25 69q26-6 46 7" stroke-width="7"/></g></svg>`,
  edge: svg`<svg class="edgeicon" width="106" height="106" viewBox="0 0 106 106"><defs><linearGradient id="e1" x2="1" y2=".5"><stop offset="0" stop-color="#4fb4f2"/><stop offset=".5" stop-color="#55c3c9"/><stop offset="1" stop-color="#86e15a"/></linearGradient><linearGradient id="e2" x2="0" y2="1"><stop offset="0" stop-color="#3a9be6"/><stop offset="1" stop-color="#2f78d8"/></linearGradient><linearGradient id="e3" x2="1" y2="1"><stop offset="0" stop-color="#1f4a92"/><stop offset="1" stop-color="#2a60b2"/></linearGradient></defs>
    <path d="M1 52Q3 2 53 0q50 3 52 46 0 25-24 25-18 0-20-10 5-6 5-12 0-22-32-24Q8 27 1 52z" fill="url(#e1)"/>
    <path d="M0 53Q5 26 32 25q25 0 33 18-8-6-16-1-12 10-8 30 6 26 32 31-10 3-20 3Q4 102 0 53z" fill="url(#e2)"/>
    <path d="M42 58q-2 32 38 28 8-2 15-7 3 0 1 4-10 17-28 22-28-6-35-30-4-20 12-33-3 8-3 16z" fill="url(#e3)"/></svg>`,
  trash: svg`<svg width="84" height="110" viewBox="0 0 84 110"><defs><linearGradient id="tr"><stop offset="0" stop-color="#5d6366"/><stop offset=".3" stop-color="#7b8184"/><stop offset=".6" stop-color="#686e71"/><stop offset="1" stop-color="#494f52"/></linearGradient></defs>
    <ellipse cx="42" cy="17" rx="41" ry="9" fill="#555b5e"/><path d="M6 17l7-8 8-5 10 1 7 4 7 3 9-8 10 4 9 3 6 4-3 8-6 4H12z" fill="#cfcfcf"/><path d="M12 9l14-5 7 8-6 5-14 3zM46 8l5-6 10 4-2 10-12 6z" fill="#f4f4f4"/><path d="M14 18l12-3 4 8H16z" fill="#9a9a9a"/><path d="M29 14l9-3-3 7-4 2z" fill="#52c7c9"/><path d="M48 18l7-5 4 6-8 5z" fill="#a33b36"/><path d="M34 18l4-4 2 8h-6z" fill="#7bc75a"/><path d="M57 17l6-6 3 5-6 7z" fill="#2f4c8c"/><path d="M66 14l8-3 2 6-6 7z" fill="#ededed"/>
    <path d="M1 17q12 10 41 10t41-10L73 98q-4 11-31 11T11 98z" fill="url(#tr)"/><path d="M28 26q16 20 30 8l-4-8z" fill="#a5aaac" opacity=".45"/><path d="M15 95q26 12 54 0l-1 4q-26 10-52 0z" fill="#a8adaf" opacity=".4"/></svg>`,
};

const sidePanel = (x: number, y: number) => svg`
  <path d=${`M${x} ${y}h8M${x} ${y + 13}h6M${x + 10} ${y + 13}h10`} stroke="#aaa" stroke-width="1.500"/>
  <path d=${`M${x} ${y + 6}h22M${x} ${y + 20}h22M${x} ${y + 24}h16M${x} ${y + 39}h22M${x} ${y + 43}h22`} stroke="#6b6b6b" stroke-width="2"/>`;
const lines = (x: number, y: number, ws: number[], step: number, color: string) =>
  svg`<path d=${ws.map((w, i) => `M${x} ${y + i * step}h${w}`).join("")} stroke=${color} stroke-width="1.100"/>`;
const smallNote = (x: number, y: number) => svg`<svg x=${x} y=${y} width="36" height="36" viewBox="0 0 95 95">${penNote}</svg>`;

const thumbs = [
  svg`<svg class="thumb1" width="111" height="82"><rect width="111" height="82" fill="#1b1c1f"/><rect width="111" height="7" fill="#26272a"/><rect x="3" y="7" width="76" height="73" fill="#fff"/><path d="M10 9h17" stroke="#777"/><path d="M4 17h74" stroke="#e4e4e4"/>${lines(11, 26, [11, 22, 17, 20, 30, 25, 12, 24, 29, 12, 22, 28, 21, 15, 14, 16, 13, 19, 17, 24, 9, 11, 10, 14, 11, 34], 2.13, "#777")}${sidePanel(84, 13)}<rect x="102" y="73" width="7" height="3" fill="#fff"/><rect x="34" y="77" width="16" height="3" fill="#111"/></svg>`,
  svg`<svg class="thumb2" width="111" height="103"><rect width="111" height="97" fill="#232426"/><rect width="111" height="10" fill="#55565a"/><circle cx="2.500" cy="2" r="1.200" fill="#e55"/><circle cx="5" cy="2" r="1.200" fill="#eb4"/><circle cx="7.500" cy="2" r="1.200" fill="#5c5"/><path d="M45 2.500h14M4 6h8M30 6h40" stroke="#bbb"/><rect y="10" width="76" height="86" fill="#fff"/><path d="M0 18h75" stroke="#e0e0e0"/>${lines(9, 32, [5, 5, 14, 8, 12, 9, 40, 46, 17], 3.1, "#666")}${lines(9, 63, [34, 66, 5, 13, 18, 11, 8, 9], 3.1, "#444")}<path d="M9 91h35" stroke="#666"/>${sidePanel(80, 17)}<rect x="102" y="15" width="6" height="3" fill="#e6a93a"/><rect x="80" y="41" width="5" height="2" fill="#e6a93a"/><rect x="80" y="57" width="7" height="2" fill="#e6a93a"/><rect x="29" y="94" width="19" height="3" fill="#111"/>${smallNote(72, 66)}</svg>`,
  svg`<svg class="thumb3" width="111" height="97"><rect width="111" height="85" fill="#232426"/><rect width="111" height="8" fill="#55565a"/><path d="M45 2.500h12M4 5.500h8M30 5.500h40" stroke="#aaa"/><rect y="8" width="79" height="76" fill="#fff"/>${lines(8, 10, [66, 65, 66, 64, 46], 1.8, "#aaa")}${lines(8, 20, [65, 66, 66, 42], 1.8, "#aaa")}${lines(8, 30, [66, 64, 36], 1.8, "#aaa")}${lines(8, 37, [66, 66, 60, 66, 66, 64, 66, 66, 60], 1.8, "#aaa")}${sidePanel(83, 14)}<rect x="83" y="50" width="7" height="2" fill="#e6a93a"/><rect x="32" y="82" width="17" height="3" fill="#111"/>${smallNote(73, 60)}</svg>`,
];

interface App { id: string; badge?: string; run?: boolean; }
const APPS: (App | "sep")[] = [
  { id: "finder", run: true }, { id: "launchpad" }, { id: "siri" }, { id: "safari", run: true },
  { id: "mail", badge: "2.310", run: true }, { id: "photos" }, { id: "store", badge: "5" }, { id: "settings", badge: "1" },
  { id: "missing" }, { id: "missing" }, { id: "chrome", run: true }, { id: "missing" }, { id: "skype" }, "sep",
  { id: "notes", run: true }, { id: "spotify", run: true }, { id: "edge", run: true }, "sep",
  { id: "t0" }, { id: "t1" }, { id: "t2" }, { id: "trash" },
];

@customElement("os-dock")
class OsDock extends LitElement {
  static styles = [base, css`
    :host { width: 2663px; height: 148px; margin: 4px 0 0 108px; border: 2px solid #3b3b39; border-radius: 44px; background: #161613; }
    .row { display: flex; height: 144px; padding-left: 4px; }
    .cell { position: relative; width: 126.800px; flex: none; display: flex; align-items: center; justify-content: center; height: 134px; }
    .sep { width: 57.500px; display: flex; justify-content: center; padding: 19px 0 0 4px; flex: none; }
    .rule { width: 2px; height: 108px; background: #474745; }
    .q { font-size: 125px; line-height: 134px; font-weight: 300; padding-top: 1px; transform: scaleX(1.12); background: linear-gradient(#a9a9a9 20%, #858585 80%); -webkit-background-clip: text; background-clip: text; color: transparent; }
    .run { position: absolute; left: 59px; top: 134px; width: 8px; height: 8px; border-radius: 50%; background: #9b9b99; }
    .badge { position: absolute; top: 9px; right: 1px; min-width: 44px; height: 44px; border-radius: 22px; padding: 0 6px; background: #e14b3e; color: #fff; font-size: 25px; line-height: 44px; text-align: center; letter-spacing: -1px; }
    .petals { isolation: isolate; }
    .petal { mix-blend-mode: multiply; }
    .spotify, .edgeicon { margin-left: 1px; }
    .thumb1 { margin-top: 2px; } .thumb2 { margin-top: 6px; } .thumb3 { margin-top: 14px; }
  `];
  render() {
    return html`<div class="row">${APPS.map((a) => a === "sep"
      ? html`<div class="sep"><i class="rule"></i></div>`
      : html`<div class="cell">
          ${a.id === "missing" ? html`<span class="q">?</span>` : /^t\d/.test(a.id) ? thumbs[+a.id[1]] : glyphs[a.id]}
          ${a.badge ? html`<span class="badge">${a.badge}</span>` : nothing}
          ${a.run ? html`<i class="run"></i>` : nothing}
        </div>`)}</div>`;
  }
}

/* ---------- desktop ---------- */

@customElement("app-root")
class AppRoot extends LitElement {
  static styles = [base, css`
    :host { position: relative; width: 2880px; height: 1800px; overflow: hidden; background: #000; }
    .edge { position: absolute; left: 0; top: 286px; width: 7px; height: 1238px; background: linear-gradient(#56543c, #1c1a10 3%, #0c0d06 8%, #3a3820 14%, #5f6640 24%, #8a8a5c 30%, #8a8462 38%, #50504a 46%, #101820 52%, #0a1220 76%, #0d1826 96%, #000); }
    .peek { position: absolute; left: -8px; font-size: 24px; line-height: 36px; color: #d5d5d5; }
    .p1 { top: 917px; } .p2 { top: 953px; }
    .window { position: relative; width: 2870px; height: 1588px; margin-left: 8px; border-radius: 22px; overflow: hidden; }
    .window::after { content: ""; position: absolute; inset: 0; border: 2px solid rgba(255, 255, 255, .27); border-radius: 22px; pointer-events: none; }
  `];
  render() {
    return html`
      <div class="edge"><span class="peek p1">e</span><span class="peek p2">g</span></div>
      <os-menubar></os-menubar>
      <div class="window">
        <browser-chrome></browser-chrome>
        <booking-page></booking-page>
        <download-shelf></download-shelf>
      </div>
      <os-dock></os-dock>`;
  }
}
